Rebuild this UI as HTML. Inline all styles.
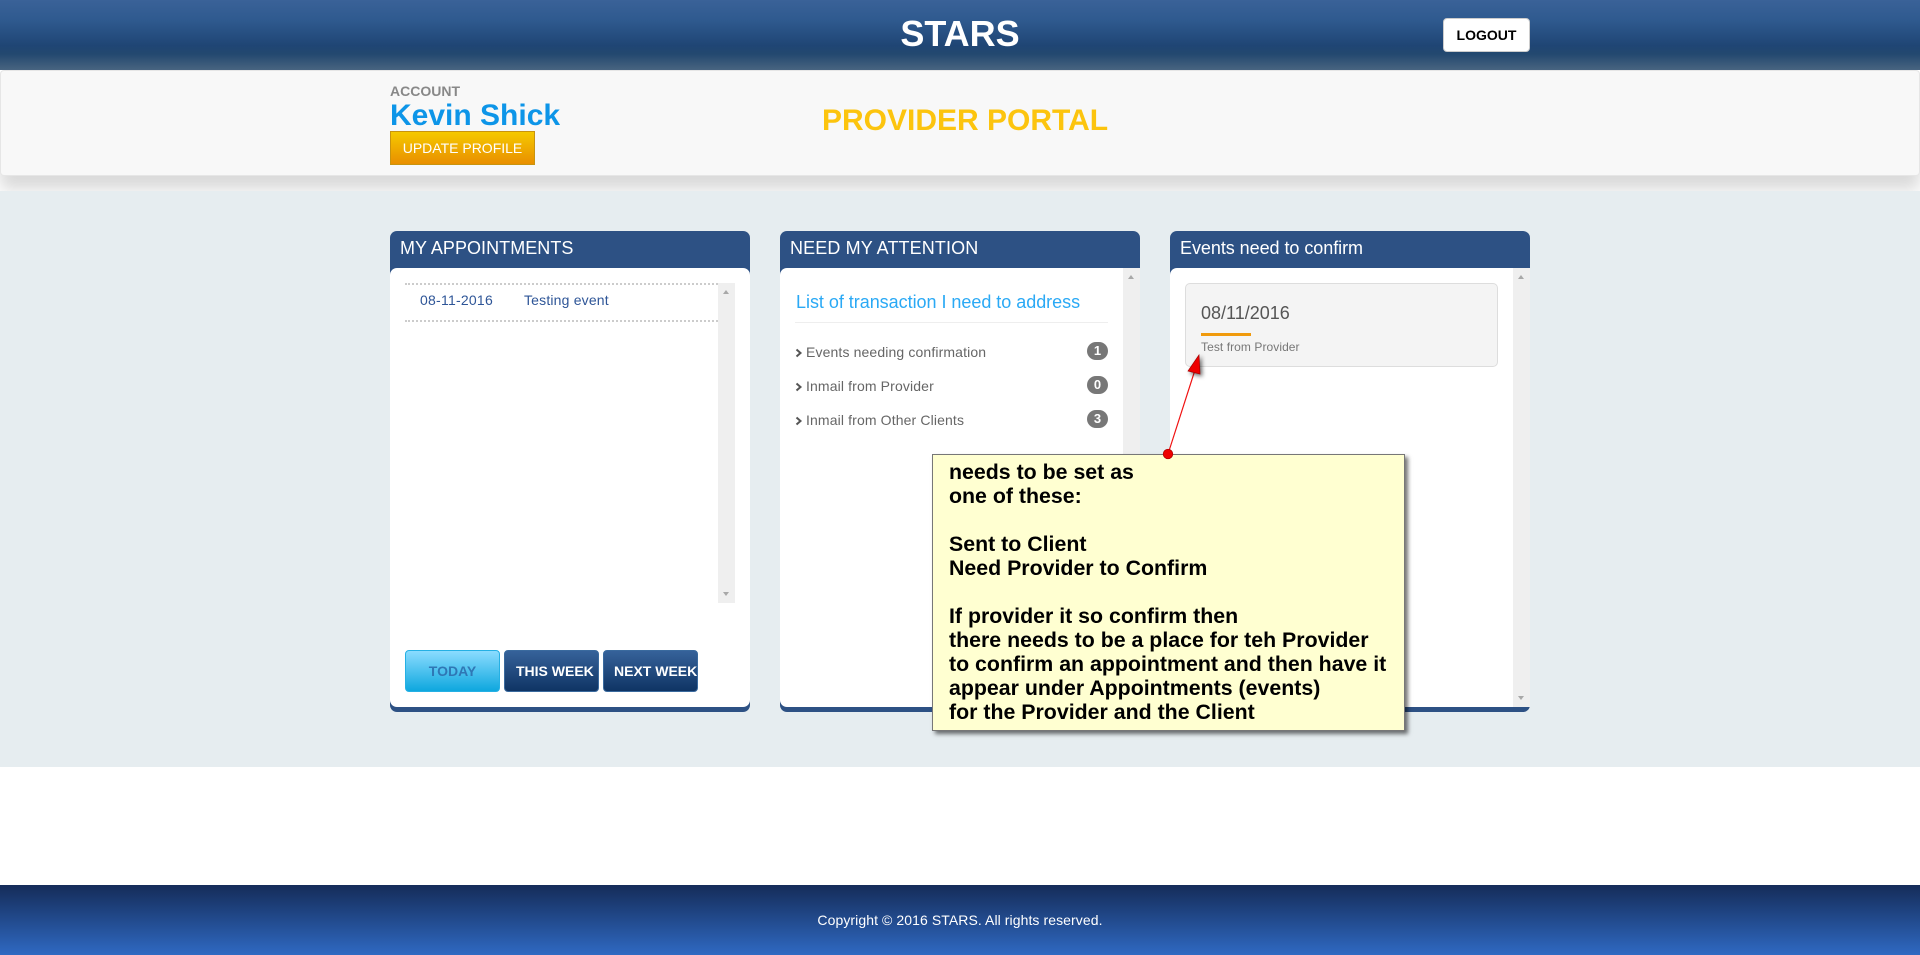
<!DOCTYPE html>
<html><head><meta charset="utf-8"><title>STARS</title>
<style>
*{box-sizing:border-box}
html,body{margin:0;padding:0;width:1920px;height:955px;overflow:hidden;background:#fff;font-family:"Liberation Sans",Arial,sans-serif}
.a{position:absolute;white-space:nowrap}
.hdr{left:0;top:0;width:1920px;height:70px;background:linear-gradient(#3a6298 0,#2f5a8f 20px,#1f4574 46px,#23486f 54px,#486480 70px)}
.shadowband{left:0;top:70px;width:1920px;height:121px;overflow:hidden;background:#fff}
.sub{position:absolute;left:0;top:0;width:1920px;height:106px;background:#f8f8f8;border:1px solid #e6e6e6;border-radius:4px;box-shadow:0 14px 16px rgba(0,0,0,.15)}
.main{left:0;top:191px;width:1920px;height:576px;background:#e6edf0}
.foot{left:0;top:885px;width:1920px;height:70px;background:linear-gradient(#152c59,#2f69c2);color:#fff;font-size:14px;text-align:center;line-height:70px;letter-spacing:.08px}
.panel{width:360px;height:481px;top:231px;background:#2d5184;border-radius:7px}
.panel h3{position:absolute;margin:0;left:10px;top:0;font-size:18px;font-weight:400;color:#fff;line-height:34px}
.body{position:absolute;left:0;top:37px;width:360px;height:439px;background:#fff;border-radius:7px}
.sb{background:#efefef;width:17px}
.up,.dn{position:absolute;left:5px;width:0;height:0;border-left:3.5px solid transparent;border-right:3.5px solid transparent}
.up{top:7px;border-bottom:4px solid #a8a8a8}
.dn{bottom:7px;border-top:4px solid #a8a8a8}
.btn{top:650px;width:95px;height:42px;border-radius:4px;font-size:14px;font-weight:700;line-height:41px}
.navy{background:linear-gradient(#36629a,#0f3464);border:1px solid #3a6a9e;color:#fff}
.item{left:806px;font-size:14px;color:#666;line-height:20px;letter-spacing:.13px}
.chev{left:795px}
.badge{left:1087px;width:21px;height:18px;border-radius:9px;background:#777;color:#fff;font:700 13px/17px "Liberation Sans",sans-serif;text-align:center}
.note{left:932px;top:454px;width:473px;height:277px;background:#ffffd1;border:1px solid #777;box-shadow:3px 3px 4px rgba(0,0,0,.55)}
.note div{position:absolute;left:16px;top:5px;font-size:21.33px;font-weight:700;line-height:24px;color:#000;white-space:pre}
</style></head><body>

<div class="a hdr"></div>
<div class="a" style="left:0;top:12px;width:1920px;text-align:center;font-size:36px;font-weight:700;color:#fff;line-height:44px">STARS</div>
<div class="a" style="left:1443px;top:18px;width:87px;height:34px;background:#fff;border:1px solid #ccc;border-radius:4px;text-align:center;font-size:14px;font-weight:700;color:#000;line-height:32px">LOGOUT</div>

<div class="a shadowband"><div class="sub"></div></div>
<div class="a" style="left:390px;top:82px;font-size:14px;font-weight:700;color:#888;line-height:18px">ACCOUNT</div>
<div class="a" style="left:390px;top:99px;font-size:30px;font-weight:700;color:#0d95e8;line-height:34px">Kevin Shick</div>
<div class="a" style="left:390px;top:131px;width:145px;height:34px;background:linear-gradient(#f5c900,#e98f00);border:1px solid #c8940f;color:#fff;font-size:14px;text-align:center;line-height:32px">UPDATE PROFILE</div>
<div class="a" style="left:822px;top:101px;font-size:30px;font-weight:700;color:#fcc40e;line-height:40px">PROVIDER PORTAL</div>

<div class="a main"></div>

<!-- Panel 1 -->
<div class="a panel" style="left:390px"><h3 style="letter-spacing:.05px">MY APPOINTMENTS</h3><div class="body"></div></div>
<div class="a" style="left:405px;top:283px;width:313px;height:2px;border-top:2px dotted #ccc"></div>
<div class="a" style="left:405px;top:320px;width:313px;height:2px;border-top:2px dotted #ccc"></div>
<div class="a" style="left:420px;top:290px;font-size:14px;color:#2e5597;line-height:20px;letter-spacing:.24px">08-11-2016</div>
<div class="a" style="left:524px;top:290px;font-size:14px;color:#2e5597;line-height:20px;letter-spacing:.18px">Testing event</div>
<div class="a sb" style="left:718px;top:283px;height:320px"><i class="up"></i><i class="dn"></i></div>
<div class="a btn" style="left:405px;background:linear-gradient(#8bdcff,#0ea7de);border:1px solid #25b0e4;color:#2f77b5;text-align:center">TODAY</div>
<div class="a btn navy" style="left:504px;padding-left:11px">THIS WEEK</div>
<div class="a btn navy" style="left:603px;padding-left:10px">NEXT WEEK</div>

<!-- Panel 2 -->
<div class="a panel" style="left:780px"><h3 style="letter-spacing:.12px">NEED MY ATTENTION</h3><div class="body" style="border-radius:7px 0 7px 7px"></div></div>
<div class="a sb" style="left:1123px;top:268px;height:439px"><i class="up"></i></div>
<div class="a" style="left:796px;top:291px;font-size:18px;color:#2aa9f5;line-height:22px;letter-spacing:-.03px">List of transaction I need to address</div>
<div class="a" style="left:795px;top:322px;width:313px;height:1px;background:#eee"></div>
<svg class="a chev" style="top:348px" width="8" height="10" viewBox="0 0 8 10"><path d="M1.5 1.5 5.5 5 1.5 8.5" fill="none" stroke="#555" stroke-width="2"/></svg>
<svg class="a chev" style="top:382px" width="8" height="10" viewBox="0 0 8 10"><path d="M1.5 1.5 5.5 5 1.5 8.5" fill="none" stroke="#555" stroke-width="2"/></svg>
<svg class="a chev" style="top:416px" width="8" height="10" viewBox="0 0 8 10"><path d="M1.5 1.5 5.5 5 1.5 8.5" fill="none" stroke="#555" stroke-width="2"/></svg>
<div class="a item" style="top:342px">Events needing confirmation</div>
<div class="a item" style="top:376px">Inmail from Provider</div>
<div class="a item" style="top:410px">Inmail from Other Clients</div>
<div class="a badge" style="top:342px">1</div>
<div class="a badge" style="top:376px">0</div>
<div class="a badge" style="top:410px">3</div>

<!-- Panel 3 -->
<div class="a panel" style="left:1170px"><h3 style="letter-spacing:-.05px">Events need to confirm</h3><div class="body" style="border-radius:7px 0 7px 7px"></div></div>
<div class="a sb" style="left:1513px;top:268px;height:439px"><i class="up"></i><i class="dn"></i></div>
<div class="a" style="left:1185px;top:283px;width:313px;height:84px;background:#f4f4f4;border:1px solid #ddd;border-radius:5px"></div>
<div class="a" style="left:1201px;top:302px;font-size:18px;color:#555;line-height:22px">08/11/2016</div>
<div class="a" style="left:1201px;top:333px;width:50px;height:3px;background:#f09a0c"></div>
<div class="a" style="left:1201px;top:339px;font-size:12px;color:#777;line-height:16px;letter-spacing:.07px">Test from Provider</div>

<!-- Callout -->
<div class="a note"><div>needs to be set as
one of these:

Sent to Client
Need Provider to Confirm

If provider it so confirm then
there needs to be a place for teh Provider
to confirm an appointment and then have it
appear under Appointments (events)
for the Provider and the Client</div></div>
<svg class="a" style="left:1150px;top:340px;overflow:visible" width="70" height="130" viewBox="0 0 70 130">
<line x1="18" y1="114" x2="45" y2="30" stroke="#f01010" stroke-width="1.2"/>
<path d="M49 15 38 31 50 34Z" fill="#ee0000" stroke="#a00" stroke-width=".7" style="filter:drop-shadow(2px 2px 2px rgba(0,0,0,.6))"/>
<circle cx="18" cy="114" r="4.8" fill="#ee0000" stroke="#a00" stroke-width=".7"/>
</svg>

<div class="a foot">Copyright © 2016 STARS. All rights reserved.</div>
</body></html>
